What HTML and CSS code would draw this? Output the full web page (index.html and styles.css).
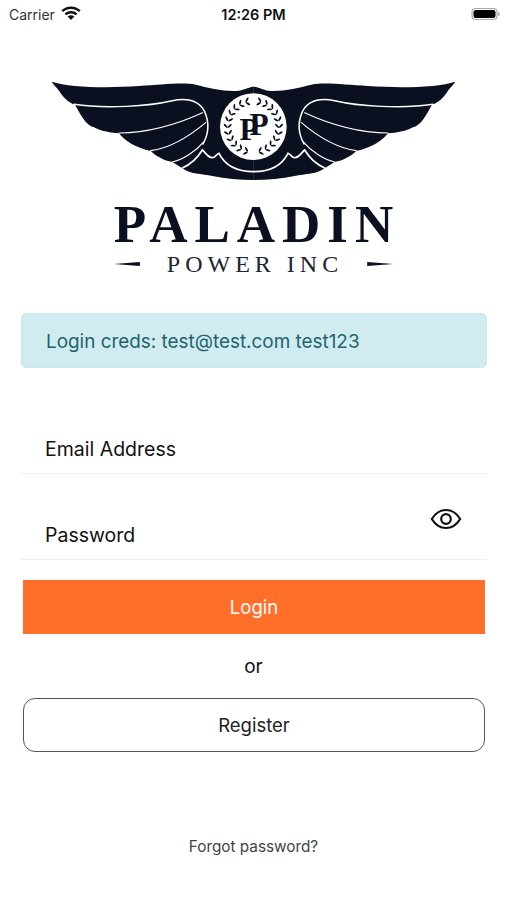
FILE: index.html
```html
<!DOCTYPE html>
<html lang="en">
<head>
    <meta charset="UTF-8">
    <meta name="viewport" content="width=device-width, initial-scale=1.0">
    <title>Paladin Power Login</title>
    <link rel="stylesheet" href="styles.css">
</head>
<body>
    <div class="status-bar">
        <div class="carrier">
            <span>Carrier</span>
            <svg class="wifi" viewBox="0 0 20 14" width="20" height="14">
                <g fill="none" stroke="#111" stroke-width="2.400">
                    <path d="M1.200 5.200C6 .6 14 .6 18.800 5.200"/>
                    <path d="M4.400 8.400C7.600 5.500 12.400 5.500 15.600 8.400"/>
                </g>
                <path d="M6.600 10.400C8.600 8.800 11.400 8.800 13.400 10.400L10 14z" fill="#111"/>
            </svg>
        </div>
        <div class="clock">12:26 PM</div>
        <svg class="battery" viewBox="0 0 30 14" width="30" height="14">
            <rect x="1" y="1.500" width="25" height="11" rx="3.500" fill="none" stroke="#aaa" stroke-width="1.200"/>
            <rect x="2.500" y="3" width="22" height="8" rx="2.200" fill="#000"/>
            <rect x="27" y="5" width="1.500" height="4" rx=".7" fill="#aaa"/>
        </svg>
    </div>

    <div class="brand">
        <svg class="wings" viewBox="0 0 1290 360" width="430" height="120">
            <defs>
                <g id="wing">
                    <path fill="#0b1020" d="M38 35C90 52 200 55 300 48C370 44 430 36 470 44C510 54 560 66 600 62C620 58 632 50 644 50L644 330C600 330 560 326 520 318C490 312 450 312 430 295L400 276C375 272 350 258 335 243C285 232 255 210 240 190C215 188 190 185 165 172C140 165 125 135 108 104C90 98 75 85 60 62C52 52 44 44 38 35Z"/>
                    <g fill="none" stroke="#fff" stroke-linecap="round">
                        <path stroke-width="4.500" d="M105 103C200 118 330 108 400 92C450 82 482 95 497 125C510 155 510 190 492 222"/>
                        <path stroke-width="3.500" d="M240 189C320 188 410 165 490 128"/>
                        <path stroke-width="3.500" d="M335 242C390 235 450 200 500 158"/>
                        <path stroke-width="3.500" d="M400 276C430 270 470 245 495 215"/>
                        <path stroke-width="5" d="M430 294C450 285 475 265 490 240C500 248 510 268 525 262C532 256 535 252 540 250C560 290 600 305 644 305"/>
                    </g>
                </g>
                <g id="leaf" fill="#0b1020">
                    <ellipse cx="-1" cy="-83" rx="8" ry="2.800" transform="rotate(45 -1 -83)"/>
                    <ellipse cx="-1" cy="-71" rx="8" ry="2.800" transform="rotate(-45 -1 -71)"/>
                </g>
                <g id="laurel">
                    <use href="#leaf" transform="rotate(14)"/>
                    <use href="#leaf" transform="rotate(29)"/>
                    <use href="#leaf" transform="rotate(44)"/>
                    <use href="#leaf" transform="rotate(59)"/>
                    <use href="#leaf" transform="rotate(74)"/>
                    <use href="#leaf" transform="rotate(89)"/>
                    <use href="#leaf" transform="rotate(104)"/>
                    <use href="#leaf" transform="rotate(119)"/>
                    <use href="#leaf" transform="rotate(134)"/>
                    <use href="#leaf" transform="rotate(149)"/>
                    <use href="#leaf" transform="rotate(164)"/>
                </g>
            </defs>
            <use href="#wing"/>
            <use href="#wing" transform="translate(1287 0) scale(-1 1)"/>
            <circle cx="643" cy="170" r="100" fill="#fff"/>
            <g transform="translate(643 170)">
                <use href="#laurel"/>
                <use href="#laurel" transform="scale(-1 1)"/>
            </g>
            <text class="mono" x="630" y="209">P</text>
            <text class="mono" x="660" y="196">P</text>
        </svg>
        <div class="brand-name">PALADIN</div>
        <div class="brand-sub">
            <span class="dash dash-left"></span>
            <span class="sub-text">POWER INC</span>
            <span class="dash dash-right"></span>
        </div>
    </div>

    <div class="alert">Login creds: test@test.com test123</div>

    <div class="field field-email">Email Address</div>
    <div class="field field-password">
        <span>Password</span>
        <svg class="eye" viewBox="0 0 32 24" width="32" height="24">
            <path d="M1.800 12C5.500 6 10 3 16 3s10.500 3 14.200 9C26.500 18 22 21 16 21S5.500 18 1.800 12z" fill="none" stroke="#111" stroke-width="2.200"/>
            <circle cx="16" cy="12" r="4.800" fill="none" stroke="#111" stroke-width="2.200"/>
        </svg>
    </div>

    <button class="btn btn-login">Login</button>
    <div class="or">or</div>
    <button class="btn btn-register">Register</button>
    <div class="forgot">Forgot password?</div>
</body>
</html>
```

FILE: styles.css
```css
body {
    margin: 0;
    width: 507px;
    height: 900px;
    overflow: hidden;
    background-color: #FFFFFF;
    font-family: Inter, "Liberation Sans", sans-serif;
    color: #111111;
}

.status-bar {
    display: flex;
    justify-content: space-between;
    align-items: center;
    height: 28px;
    padding: 0 6px 0 9px;
    position: relative;
    font-size: 14px;
}

.carrier {
    display: flex;
    align-items: center;
    gap: 6px;
    color: #333333;
}

.wifi {
    margin-top: -2px;
}

.clock {
    position: absolute;
    left: 0;
    right: 0;
    text-align: center;
    font-size: 14.500px;
    font-weight: 600;
}

/* logo */
.brand {
    margin-top: 42px;
    display: flex;
    flex-direction: column;
    align-items: center;
}

.wings {
    display: block;
}

.mono {
    font-family: "Liberation Serif", serif;
    font-weight: 700;
    font-size: 94px;
    fill: #0b1020;
    text-anchor: middle;
}

.brand-name {
    margin-top: 6px;
    padding-left: 7px;
    font-family: "Liberation Serif", serif;
    font-weight: 700;
    font-size: 53px;
    line-height: 56px;
    letter-spacing: 7px;
    color: #0b1020;
}

.brand-sub {
    display: flex;
    align-items: center;
    gap: 24px;
    font-family: "Liberation Serif", serif;
    font-size: 24px;
    line-height: 24px;
    letter-spacing: 5px;
    color: #20242f;
}

.dash {
    width: 26px;
    height: 4px;
    background-color: #0b1020;
}

.dash-left {
    margin-right: 3px;
    clip-path: polygon(0 50%, 100% 0, 100% 100%);
}

.dash-right {
    clip-path: polygon(0 0, 100% 50%, 0 100%);
}

/* form */
.alert {
    margin: 37px 20px 0 21px;
    height: 55px;
    line-height: 55px;
    padding-left: 24px;
    box-sizing: border-box;
    background-color: #D1ECF1;
    border: 1px solid #C9E8EC;
    border-radius: 5px;
    color: #1D646B;
    font-size: 18.900px;
}

.field {
    margin: 0 20px 0 21px;
    padding-left: 24px;
    border-bottom: 1px solid #EEEEEE;
    font-size: 19.500px;
    display: flex;
    align-items: flex-end;
    justify-content: space-between;
    padding-bottom: 11px;
    box-sizing: border-box;
    line-height: 26px;
}

.field-email {
    height: 106px;
}

.field-password {
    height: 86px;
    position: relative;
}

.eye {
    position: absolute;
    right: 25px;
    top: 33px;
}

.btn {
    display: block;
    margin: 0 22px 0 23px;
    width: 462px;
    height: 54px;
    box-sizing: border-box;
    font-family: inherit;
    font-size: 18.500px;
}

.btn-login {
    margin-top: 20px;
    border: none;
    background-color: #FF6F2A;
    color: #FFFFFF;
}

.or {
    text-align: center;
    font-size: 19px;
    line-height: 24px;
    margin-top: 21px;
}

.btn-register {
    margin-top: 19px;
    background-color: #FFFFFF;
    border: 1.500px solid #555555;
    border-radius: 12px;
    color: #222222;
}

.forgot {
    margin-top: 85px;
    text-align: center;
    font-size: 15.300px;
    line-height: 20px;
    color: #444444;
}
```
